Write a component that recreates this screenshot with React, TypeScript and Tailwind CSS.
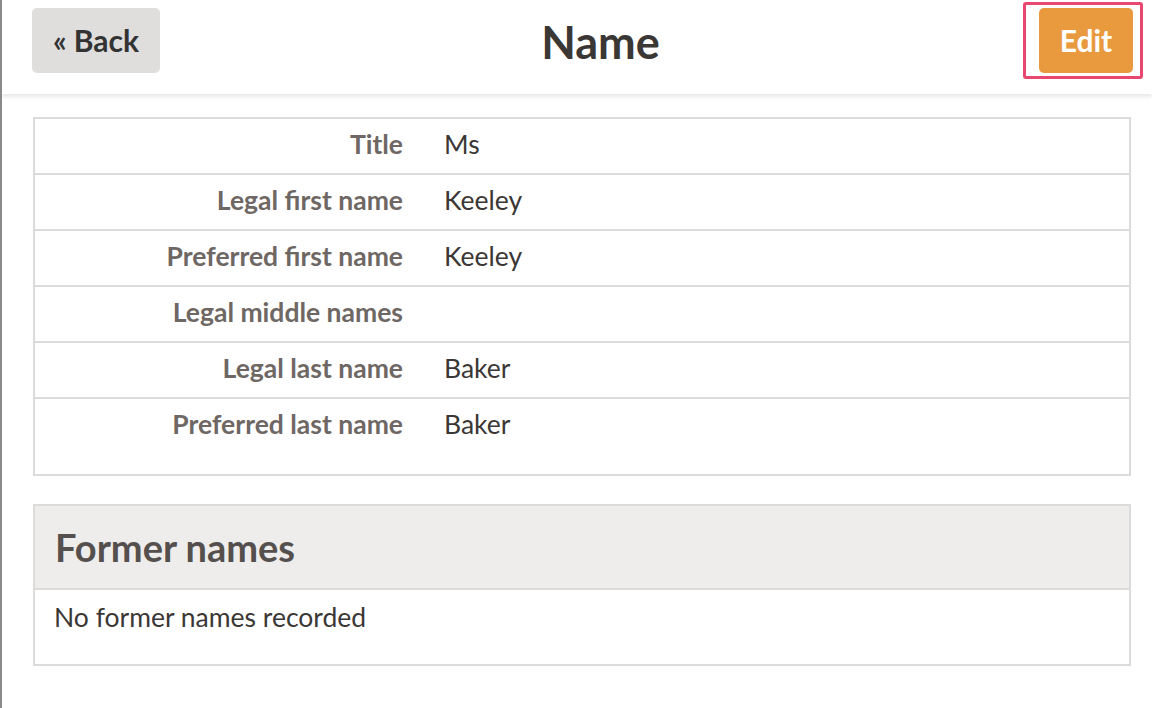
const rows: { label: string; value: string }[] = [
  { label: 'Title', value: 'Ms' },
  { label: 'Legal first name', value: 'Keeley' },
  { label: 'Preferred first name', value: 'Keeley' },
  { label: 'Legal middle names', value: '' },
  { label: 'Legal last name', value: 'Baker' },
  { label: 'Preferred last name', value: 'Baker' },
]

export default function App() {
  return (
    <div className="h-[708px] w-[1152px] overflow-hidden border-l-2 border-[#8a8a8a] bg-white font-['Lato',sans-serif] text-[#3b3735]">
      {/* Header */}
      <header className="relative z-10 flex h-[94px] items-start justify-between bg-white pl-[30px] pr-[9px] shadow-[0_2px_5px_rgba(0,0,0,0.12)]">
        <button className="mt-2 h-[65px] w-[128px] rounded-[5px] bg-[#dfdedd] text-[30px] font-bold text-[#333]">
          « Back
        </button>
        <h1 className="mt-[15px] pl-[18px] text-[45px] font-bold leading-[54px] text-[#3b3735]">Name</h1>
        <div className="mt-[2px] h-[77px] w-[120px] rounded-[3px] border-[3px] border-[#e8476f] pl-[13px] pt-[3px]">
          <button className="h-[65px] w-[94px] rounded-[5px] bg-[#e99a3f] text-[30px] font-bold text-white">
            Edit
          </button>
        </div>
      </header>

      <main className="px-[31px] pt-[23px]">
        {/* Details table */}
        <div className="w-[1098px] border-2 border-[#dddbda] pb-[19px]">
          {rows.map((r, i) => (
            <div
              key={r.label}
              className={`flex h-[56px] items-start pt-[6px] leading-[38px] ${i < rows.length - 1 ? 'border-b-2 border-[#dddbda]' : ''}`}
            >
              <div className="w-[368px] text-right text-[26.5px] font-bold text-[#6e6764]">{r.label}</div>
              <div className="pl-[41px] text-[26.5px] text-[#3b3735]">{r.value}</div>
            </div>
          ))}
        </div>

        {/* Former names */}
        <div className="mt-[28px] w-[1098px] border-2 border-[#dddbda]">
          <div className="flex h-[84px] items-center border-b-2 border-[#dddbda] bg-[#eeedeb] px-[20px]">
            <h2 className="text-[38px] font-bold text-[#55504d]">Former names</h2>
          </div>
          <div className="h-[74px] px-[19px] pt-[8px] text-[26.5px] leading-[38px] text-[#3b3735]">No former names recorded</div>
        </div>
      </main>
    </div>
  )
}
